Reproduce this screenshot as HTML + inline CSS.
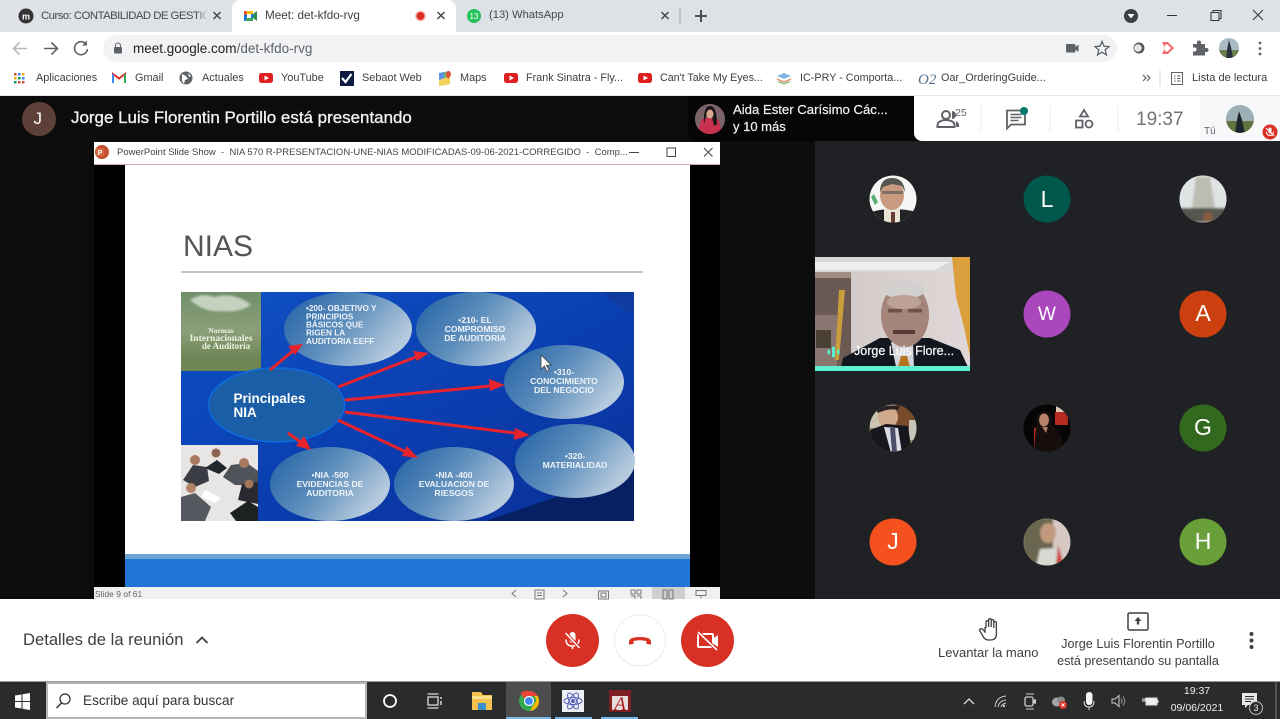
<!DOCTYPE html>
<html lang="es"><head><meta charset="utf-8"><title>Meet: det-kfdo-rvg</title>
<style>
html,body{margin:0;padding:0;width:1280px;height:719px;overflow:hidden;background:#fff}
body{position:relative;font-family:"Liberation Sans",sans-serif}
.a{position:absolute}
.t{position:absolute;white-space:nowrap;line-height:1}
svg{position:absolute;left:0;top:0;overflow:visible}
</style></head><body>
<div class="a" style="left:0;top:0;width:1280px;height:32px;background:#dee1e6"></div>
<div class="a" style="left:0;top:32px;width:1280px;height:32px;background:#fff"></div>
<div class="a" style="left:103px;top:35px;width:1014px;height:27px;border-radius:14px;background:#f1f3f4"></div>
<div class="a" style="left:0;top:64px;width:1280px;height:32px;background:#fff;border-bottom:1px solid #e8e8e8;box-sizing:border-box"></div>
<div class="a" style="left:232px;top:0;width:224px;height:33px;background:#fff;border-radius:8px 8px 0 0"></div>

<!-- main regions -->
<div class="a" style="left:0;top:96px;width:815px;height:503px;background:#0c0c0c"></div>
<div class="a" style="left:815px;top:141px;width:465px;height:458px;background:#202124"></div>
<div class="a" style="left:688px;top:96px;width:240px;height:45px;background:#050505;border-radius:0 0 0 8px"></div>
<div class="a" style="left:914px;top:96px;width:366px;height:45px;background:#fff;border-radius:0 0 0 8px"></div>
<div class="a" style="left:1200px;top:96px;width:80px;height:45px;background:#f7f8f9"></div>

<!-- slide window -->
<div class="a" style="left:94px;top:142px;width:626px;height:457px;background:#000"></div>
<div class="a" style="left:94px;top:142px;width:626px;height:23px;background:#fff;border-bottom:1px solid #c9b3a6;box-sizing:border-box"></div>
<div class="a" style="left:125px;top:165px;width:565px;height:422px;background:#fff"></div>
<div class="a" style="left:125px;top:554px;width:565px;height:5px;background:#6ea3d6"></div>
<div class="a" style="left:125px;top:559px;width:565px;height:28px;background:#1f76d4"></div>
<div class="a" style="left:94px;top:587px;width:626px;height:12px;background:#f0f0f0"></div>
<div class="a" style="left:652px;top:587px;width:33px;height:12px;background:#cfcfcf"></div>
<div class="t" style="left:117px;top:148px;font-size:9.500px;color:#444">PowerPoint Slide Show &nbsp;-&nbsp; NIA 570 R-PRESENTACION-UNE-NIAS MODIFICADAS-09-06-2021-CORREGIDO &nbsp;-&nbsp; Comp...</div>
<div class="t" style="left:95px;top:590px;font-size:8.500px;color:#666">Slide 9 of 61</div>
<div class="t" style="left:183px;top:232px;font-size:30px;color:#555;font-weight:400;">NIAS</div>
<div class="a" style="left:181px;top:271px;width:462px;height:1.500px;background:#c4c4c4"></div>

<!-- bottom bars -->
<div class="a" style="left:0;top:599px;width:1280px;height:83px;background:#fff"></div>
<div class="a" style="left:0;top:681px;width:1280px;height:38px;background:#2a2b2c;border-top:1px solid #999;box-sizing:border-box"></div>
<div class="a" style="left:46px;top:682px;width:321px;height:37px;background:#fff;border:2px solid #b5b5b5;box-sizing:border-box"></div>
<div class="a" style="left:506px;top:682px;width:45px;height:37px;background:#4d4d4d"></div>
<div class="a" style="left:506px;top:717px;width:45px;height:2px;background:#76b9ed"></div>
<div class="a" style="left:555px;top:717px;width:37px;height:2px;background:#76b9ed"></div>
<div class="a" style="left:601px;top:717px;width:37px;height:2px;background:#76b9ed"></div>

<svg width="1280" height="719" viewBox="0 0 1280 719" xmlns="http://www.w3.org/2000/svg">
<defs>
<linearGradient id="bub" x1="0" y1="0" x2="1" y2="0.5"><stop offset="0" stop-color="#1f5fa5"/><stop offset=".55" stop-color="#5f8fbc"/><stop offset="1" stop-color="#b6cade"/></linearGradient>
<linearGradient id="bg" x1="0" y1="0" x2="1" y2="1"><stop offset="0" stop-color="#0f52c4"/><stop offset=".55" stop-color="#0a3eb0"/><stop offset="1" stop-color="#0a2f96"/></linearGradient>
<linearGradient id="book" x1="0" y1="0" x2="0" y2="1"><stop offset="0" stop-color="#6f8f6a"/><stop offset=".5" stop-color="#8b9f78"/><stop offset="1" stop-color="#5f7a45"/></linearGradient>
<linearGradient id="wall" x1="0" y1="0" x2="1" y2="0"><stop offset="0" stop-color="#cfc8c6"/><stop offset="1" stop-color="#e0d8d8"/></linearGradient>
<filter id="b1"><feGaussianBlur stdDeviation=".35"/></filter>
<filter id="b2"><feGaussianBlur stdDeviation="1"/></filter>
<clipPath id="cv"><rect x="815" y="257" width="155" height="110"/></clipPath>
<clipPath id="c1"><circle cx="893" cy="199" r="23.5"/></clipPath>
<clipPath id="c3"><circle cx="1203" cy="199" r="23.5"/></clipPath>
<clipPath id="c7"><circle cx="893" cy="428" r="23.5"/></clipPath>
<clipPath id="c8"><circle cx="1047" cy="428" r="23.5"/></clipPath>
<clipPath id="c11"><circle cx="1047" cy="542" r="23.5"/></clipPath>
<clipPath id="cA"><circle cx="710" cy="119" r="15"/></clipPath>
<clipPath id="cP1"><circle cx="1229" cy="48" r="10"/></clipPath>
<clipPath id="cP2"><circle cx="1240" cy="119" r="14"/></clipPath>
</defs>

<!-- tabs -->
<circle cx="26" cy="16" r="7.500" fill="#333"/><text x="26" y="19.500" font-size="9" font-weight="700" fill="#fff" text-anchor="middle" font-family="Liberation Sans">m</text>
<path d="M213.500 12l7 7m0-7l-7 7M437.500 12l7 7m0-7l-7 7M661.500 12l7 7m0-7l-7 7" stroke="#45484c" stroke-width="1.500" fill="none"/>
<g><rect x="244" y="11" width="9" height="10" rx="1" fill="#1a73e8"/><rect x="246" y="11" width="7" height="3" fill="#fbbc04"/><rect x="246" y="18" width="7" height="3" fill="#34a853"/><rect x="244" y="11" width="2.500" height="4" fill="#ea4335"/><path d="M253 14l4-3v10l-4-3z" fill="#2d8c4e"/><rect x="247" y="14" width="4" height="4" fill="#fff"/></g>
<circle cx="420.500" cy="16" r="5.500" fill="#f7c5c0"/><circle cx="420.500" cy="16" r="4" fill="#d93025"/>
<circle cx="474" cy="16" r="7" fill="#25c15b"/><text x="474" y="19" font-size="8" fill="#fff" text-anchor="middle" font-family="Liberation Sans">13</text>
<path d="M680 8v16" stroke="#a9acb0"/>
<path d="M701 10v12M695 16h12" stroke="#3c4043" stroke-width="1.800"/>
<circle cx="1131" cy="16" r="7" fill="#3c4043"/><path d="M1127.500 14h7l-3.500 4.500z" fill="#fff"/>
<path d="M1167 15.500h10" stroke="#333" stroke-width="1"/>
<path d="M1211 12.500h8v8h-8zM1213 12.500v-2h8v8h-2" stroke="#333" fill="none"/>
<path d="M1253 10l10 10m0-10l-10 10" stroke="#333" fill="none"/>

<!-- toolbar icons -->
<path d="M27 48.500H14m5.500-6l-6 6 6 6" stroke="#b4b7bb" stroke-width="1.600" fill="none"/>
<path d="M44 48.500h13m-5.500-6l6 6-6 6" stroke="#5f6368" stroke-width="1.600" fill="none"/>
<path d="M86 44a6.500 6.500 0 1 0 1.500 5" stroke="#5f6368" stroke-width="1.600" fill="none"/><path d="M87 40.500v5h-5z" fill="#5f6368"/>
<rect x="114" y="47" width="8" height="6.500" rx="1" fill="#5f6368"/><path d="M115.500 47v-1.500a2.500 2.500 0 0 1 5 0V47" stroke="#5f6368" fill="none"/>
<rect x="1066" y="44" width="9.500" height="8.500" rx="1" fill="#5f6368"/><path d="M1075.500 47l3-2.500v7.500l-3-2.500z" fill="#5f6368"/>
<path d="M1102 41.500l2 4.700 5 .4-3.800 3.300 1.200 5-4.400-2.700-4.400 2.700 1.200-5-3.800-3.300 5-.4z" stroke="#5f6368" stroke-width="1.300" fill="none"/>
<circle cx="1139" cy="48" r="5.500" fill="#555"/><circle cx="1138" cy="48" r="3.800" fill="#e8e8e8"/>
<path d="M1162 42h6l6 6-6 6h-6l3-6z" fill="#f26d6d"/><path d="M1165 44.500h2.500l3.500 3.500-3.500 3.500h-2.500z" fill="#fff"/>
<path d="M1193 44h4v-1.500a2 2 0 0 1 4 0V44h4v4h1.500a2 2 0 0 1 0 4H1205v3.500h-12v-4h1.500a2 2 0 0 0 0-4H1193z" fill="#5f6368"/>
<g clip-path="url(#cP1)"><rect x="1219" y="38" width="20" height="20" fill="#a9bcc4"/><rect x="1219" y="50" width="20" height="8" fill="#6d7f4d"/><path d="M1226 58l1.500-11 1.500-7 2 7 2 11z" fill="#29323a"/></g>
<circle cx="1260" cy="43" r="1.400" fill="#5f6368"/><circle cx="1260" cy="48.500" r="1.400" fill="#5f6368"/><circle cx="1260" cy="54" r="1.400" fill="#5f6368"/>

<!-- bookmark icons -->
<g fill="#d9503f"><rect x="14" y="73" width="2.500" height="2.500"/></g><g fill="#4285f4"><rect x="18" y="73" width="2.500" height="2.500"/><rect x="22" y="77" width="2.500" height="2.500"/></g><g fill="#f4b400"><rect x="22" y="73" width="2.500" height="2.500"/><rect x="14" y="77" width="2.500" height="2.500"/></g><g fill="#0f9d58"><rect x="18" y="77" width="2.500" height="2.500"/><rect x="14" y="81" width="2.500" height="2.500"/></g><g fill="#d9503f"><rect x="18" y="81" width="2.500" height="2.500"/><rect x="22" y="81" width="2.500" height="2.500"/></g>
<path d="M113 83V74l6 4.500 6-4.500v9" stroke="#d93025" stroke-width="2" fill="none"/><path d="M113 74v9" stroke="#4285f4" stroke-width="2"/><path d="M125 74v9" stroke="#34a853" stroke-width="2"/>
<circle cx="186" cy="78" r="6.500" fill="#5f6368"/><path d="M182 74l4 2 2 3-3 1-1 4-2-3zM188 73l3 3-2 1z" fill="#fff"/>
<g><rect x="259" y="73" width="14" height="10" rx="2.500" fill="#e02020"/><path d="M264.500 75.500l4.500 2.500-4.500 2.500z" fill="#fff"/></g>
<g><rect x="504" y="73" width="14" height="10" rx="2.500" fill="#e02020"/><path d="M509.500 75.500l4.500 2.500-4.500 2.500z" fill="#fff"/></g>
<g><rect x="638" y="73" width="14" height="10" rx="2.500" fill="#e02020"/><path d="M643.500 75.500l4.500 2.500-4.500 2.500z" fill="#fff"/></g>
<rect x="340" y="71" width="14" height="15" fill="#0d1b40"/><path d="M342 78l3.500 4 6-8" stroke="#fff" stroke-width="2.200" fill="none"/>
<g><path d="M439 73l11-2v13l-11 2z" fill="#6fb56d"/><path d="M439 80l11-4v8l-11 2z" fill="#f3d35b"/><path d="M448 71a3 3 0 0 1 3 3c0 2-3 5-3 5s-2-3-2-5a2.500 2.500 0 0 1 2-3z" fill="#e0503f"/><path d="M439 73l5-1v6l-5 2z" fill="#5b8fe8"/></g>
<path d="M777 76l7-3 7 3-7 3z" fill="#7fb3e0"/><path d="M777 79l7 3 7-3" stroke="#e88a6a" stroke-width="1.300" fill="none"/><path d="M778 81.500l6 2.500 6-2.500" stroke="#8cc07a" stroke-width="1.300" fill="none"/>
<text x="918" y="84" font-family="Liberation Serif" font-style="italic" font-size="15" fill="#54708f">O2</text>
<path d="M1143 75l3 3-3 3m4-6l3 3-3 3" stroke="#5f6368" stroke-width="1.200" fill="none"/>
<path d="M1160 70v16" stroke="#d5d7da"/>
<rect x="1171.500" y="72.500" width="11" height="12" fill="none" stroke="#5f6368"/><path d="M1174 76h1.500m1.500 0h3.500M1174 78.500h1.500m1.500 0h3.500M1174 81h1.500m1.500 0h3.500" stroke="#5f6368"/>

<!-- top bar icons -->
<circle cx="39" cy="119" r="17" fill="#5d4037"/>
<circle cx="710" cy="119" r="15" fill="#6a4a50"/><g clip-path="url(#cA)" filter="url(#b1)"><rect x="695" y="104" width="30" height="30" fill="#7a6468"/><path d="M697 135l4-15q9-5 18 0l3 15z" fill="#c8304f"/><path d="M704 124q-1-18 6-18t7 18l-3 2-3-14-4 0z" fill="#1d1214"/><ellipse cx="710" cy="114" rx="3.500" ry="4.500" fill="#d8a890"/></g>
<g fill="#5f6368"><circle cx="946" cy="115" r="4" fill="none" stroke="#5f6368" stroke-width="2"/><path d="M937.500 127v-2c0-3 4-5 8.500-5s8.500 2 8.500 5v2z" fill="none" stroke="#5f6368" stroke-width="2"/><path d="M952 111a4 4 0 0 1 0 8zM956 121c2 1 3 2.500 3 4v2h-3z"/></g>
<path d="M981 106v26M1050 106v26M1118 106v26" stroke="#eceef0"/>
<path d="M1007 110.500h18v14h-14l-4 4z" fill="none" stroke="#5f6368" stroke-width="1.800"/><path d="M1010.500 114.500h11M1010.500 117.500h11M1010.500 120.500h8" stroke="#5f6368" stroke-width="1.500"/>
<circle cx="1024" cy="111" r="4" fill="#00796b"/>
<path d="M1084 110l4 6.500h-8z" fill="none" stroke="#5f6368" stroke-width="1.800"/><rect x="1076" y="120.500" width="6.500" height="7" fill="none" stroke="#5f6368" stroke-width="1.800"/><circle cx="1089" cy="124" r="3.500" fill="none" stroke="#5f6368" stroke-width="1.800"/>
<g clip-path="url(#cP2)" filter="url(#b1)"><rect x="1226" y="105" width="28" height="28" fill="#9db0b6"/><rect x="1226" y="121" width="28" height="12" fill="#62733f"/><path d="M1235 133l2-13 2-9 3 9 3 13z" fill="#1f272c"/></g>
<circle cx="1270" cy="132" r="7.500" fill="#d93025"/><rect x="1268.500" y="127.500" width="3" height="6" rx="1.500" fill="#fff"/><path d="M1266.500 131.500q0 4 3.500 4t3.500-4M1266 128l8 8" stroke="#fff" fill="none"/>

<!-- window controls -->
<circle cx="102" cy="152" r="7" fill="#c8502e"/><rect x="96" y="148" width="8" height="8" rx="1" fill="#d2683f"/><text x="100" y="155" font-size="7" font-weight="700" fill="#fff" text-anchor="middle" font-family="Liberation Sans">P</text>
<path d="M629 152.500h10" stroke="#444"/><rect x="667" y="148" width="8.500" height="8.500" fill="none" stroke="#444"/><path d="M704 148l8.500 8.500m0-8.500l-8.500 8.500" stroke="#444" fill="none"/>
<g stroke="#777" fill="none"><path d="M516 590l-4 3.500 4 3.500M563 590l4 3.500-4 3.500"/><path d="M535 590h9v9h-9zM537 593h5M537 595.500h5"/><path d="M598.500 591h10v8h-10zM601 593h5v4h-5z"/><path d="M631 590h4v4h-4zM637 590h4v4h-4zM631 596h4v3M637 596h4v3"/><path d="M663 590h4v9h-4zM669 590h4v9h-4z"/><path d="M696 590.500h10v5h-10zM701 595.500v3"/></g>

<!-- diagram -->
<g>
<rect x="181" y="292" width="453" height="229" fill="url(#bg)"/>
<path d="M600 292h34v24z" fill="#1e6ad0"/>
<path d="M486 521L634 470v51z" fill="#062063"/>
<path d="M600 292L634 316V292z" fill="#0f3aa0"/>
<rect x="181" y="292" width="80" height="79" fill="url(#book)"/>
<path d="M190 300q12-8 24-3 12-3 22 0 10 3 15 8-12 8-30 6-16 2-31-11z" fill="#c5d2bf" filter="url(#b2)"/>
<rect x="181" y="360" width="80" height="11" fill="#6f8552"/>
<text x="221" y="333" font-family="Liberation Serif" font-weight="700" font-size="7.500" fill="#eef2e2" text-anchor="middle">Normas</text>
<text x="221" y="341" font-family="Liberation Serif" font-weight="700" font-size="9.500" fill="#eef2e2" text-anchor="middle">Internacionales</text>
<text x="226" y="349" font-family="Liberation Serif" font-weight="700" font-size="9" fill="#eef2e2" text-anchor="middle">de Auditoría</text>
<rect x="181" y="445" width="77" height="76" fill="#e8e6e4"/>
<g filter="url(#b1)">
<path d="M183 480l10-15 14 2 2 14-14 6z" fill="#3b3d44"/><circle cx="195" cy="460" r="5" fill="#a97a60"/>
<path d="M205 468l12-8 10 8-8 6z" fill="#23252c"/><circle cx="216" cy="453" r="4.500" fill="#8e6650"/>
<path d="M235 485l-12-8 8-12 16-2 11 8v14z" fill="#50525a"/><circle cx="244" cy="463" r="5" fill="#a97a60"/>
<path d="M238 500l4-16 16-2v22z" fill="#2b2b30"/><circle cx="249" cy="484" r="4.500" fill="#a07458"/>
<path d="M181 521v-24l14-4 16 14-6 14z" fill="#555a60"/><circle cx="191" cy="488" r="5" fill="#b28568"/>
<path d="M205 490l16 8-6 5-14-6z" fill="#fff"/>
<path d="M236 521l-6-8 18-12 10 6v14z" fill="#1f2024"/>
</g>
<g><ellipse cx="348" cy="329" rx="64" ry="37" fill="url(#bub)"/><ellipse cx="476" cy="329" rx="60" ry="37" fill="url(#bub)"/><ellipse cx="564" cy="382" rx="60" ry="37" fill="url(#bub)"/><ellipse cx="575" cy="461" rx="60" ry="37" fill="url(#bub)"/><ellipse cx="454" cy="484" rx="60" ry="37" fill="url(#bub)"/><ellipse cx="330" cy="484" rx="60" ry="37" fill="url(#bub)"/></g>
<ellipse cx="276.500" cy="405" rx="68" ry="37" fill="#1a5ea8" stroke="#0d6be0" stroke-width="1.500"/>
<g stroke="#e8232b" stroke-width="3" fill="#e8232b">
<path d="M270 370l24-20"/><path d="M303 344l-15 2 7 9z" stroke="none"/>
<path d="M338 387l78-30"/><path d="M429 353l-16-2 4 10z" stroke="none"/>
<path d="M345 400l146-14"/><path d="M505 385l-16-6 1 12z" stroke="none"/>
<path d="M345 412l170 21"/><path d="M530 435l-15-7-1 12z" stroke="none"/>
<path d="M338 420l68 32"/><path d="M418 458l-11-12-5 10z" stroke="none"/>
<path d="M288 433l14 10"/><path d="M311 450l-7-14-8 10z" stroke="none"/>
</g>
<g font-family="Liberation Sans" font-weight="700" fill="#eef3f8" filter="url(#b1)">
<g font-size="8.200">
<text x="306" y="311">•200- OBJETIVO Y</text><text x="306" y="319.500">PRINCIPIOS</text><text x="306" y="327.500">BÁSICOS QUE</text><text x="306" y="335.500">RIGEN LA</text><text x="306" y="344">AUDITORIA EEFF</text>
</g>
<g text-anchor="middle" font-size="8.600">
<text x="475" y="323">•210-  EL</text><text x="475" y="332">COMPROMISO</text><text x="475" y="341">DE AUDITORIA</text>
<text x="564" y="375">•310-</text><text x="564" y="384">CONOCIMIENTO</text><text x="564" y="393">DEL NEGOCIO</text>
<text x="575" y="459">•320-</text><text x="575" y="468">MATERIALIDAD</text>
<text x="454" y="478">•NIA -400</text><text x="454" y="487">EVALUACION DE</text><text x="454" y="496">RIESGOS</text>
<text x="330" y="478">•NIA -500</text><text x="330" y="487">EVIDENCIAS DE</text><text x="330" y="496">AUDITORIA</text>
</g>
<text x="233.500" y="403" font-size="13.500" fill="#fff">Principales</text><text x="233.500" y="417" font-size="13.500" fill="#fff">NIA</text>
</g>
<path d="M541 355v14l3.500-3 2.500 5.500 2-1-2.500-5.300 4.500-.2z" fill="#fff" stroke="#444" stroke-width=".8"/>
</g>

<!-- avatars -->
<circle cx="893" cy="199" r="23.500" fill="#f5f5f3"/>
<g clip-path="url(#c1)" filter="url(#b1)"><path d="M868 213q12-4 24-4t26 3v15h-50z" fill="#202428"/><rect x="884" y="209" width="16" height="14" fill="#e8e2d4"/><path d="M891 212h4v11h-4z" fill="#6b3a30"/><ellipse cx="892" cy="195" rx="12" ry="15" fill="#c89a80"/><path d="M880 192q0-14 12-14t13 14l-3-6-10-2-9 3z" fill="#54564f"/><rect x="882" y="191" width="21" height="3" fill="#5a5a5a" opacity=".7"/><path d="M871 197l4 8 3-3-4-8z" fill="#58b070"/></g>
<circle cx="1047" cy="199" r="23.500" fill="#00574b"/>
<circle cx="1203" cy="199" r="23.500" fill="#e4e6e6"/>
<g clip-path="url(#c3)" filter="url(#b2)"><rect x="1180" y="175" width="47" height="47" fill="#dfe3e4"/><path d="M1192 208l4-31h14l5 31z" fill="#bdbcb2"/><rect x="1180" y="208" width="47" height="14" fill="#55564f"/><ellipse cx="1208" cy="217" rx="5" ry="5" fill="#8a5a40"/></g>
<circle cx="1047" cy="314" r="23.500" fill="#ab47bc"/>
<circle cx="1203" cy="314" r="23.500" fill="#cc400f"/>
<circle cx="893" cy="428" r="23.500" fill="#9a8a70"/>
<g clip-path="url(#c7)" filter="url(#b1)"><rect x="870" y="405" width="24" height="23" fill="#c9c4b0"/><rect x="896" y="405" width="22" height="24" fill="#7a4c2a"/><rect x="909" y="420" width="9" height="20" fill="#c8c6b8"/><ellipse cx="888" cy="417" rx="10" ry="11" fill="#d0a88c"/><path d="M876 410q6-6 24-4l-2 4q-10-2-20 3z" fill="#2c2420"/><path d="M870 430l16-6 22 2 4 28h-40z" fill="#16181c"/><path d="M884 427l14 1 4 25h-11z" fill="#dcdce6"/><path d="M890 428h5l2 24h-5z" fill="#50506a"/></g>
<circle cx="1047" cy="428" r="23.500" fill="#050505"/>
<g clip-path="url(#c8)" filter="url(#b1)"><rect x="1055" y="412" width="13" height="13" fill="#b62a20"/><rect x="1056" y="405" width="12" height="7" fill="#dcc9b4"/><path d="M1034 428l9-4v24h-9z" fill="#b8251c"/><path d="M1036 426q0-15 8-15t8 12l10 14 2 14h-30z" fill="#14110f"/><ellipse cx="1044" cy="420" rx="5" ry="6.500" fill="#b88268"/><path d="M1042 427h6l-2 6z" fill="#a87a62"/></g>
<circle cx="1203" cy="428" r="23.500" fill="#33691e"/>
<circle cx="893" cy="542" r="23.500" fill="#f4511e"/>
<circle cx="1047" cy="542" r="23.500" fill="#8d8a72"/>
<g clip-path="url(#c11)" filter="url(#b2)"><rect x="1024" y="519" width="47" height="47" fill="#6a6650"/><rect x="1053" y="519" width="18" height="47" fill="#d8c8c4"/><ellipse cx="1048" cy="533" rx="8" ry="10" fill="#c39a80"/><path d="M1036 566l4-17 16-1 8 18z" fill="#d8dad4"/><path d="M1058 545l6 20h-8z" fill="#c84a44"/></g>
<circle cx="1203" cy="542" r="23.500" fill="#689f38"/>

<!-- video tile -->
<g clip-path="url(#cv)">
<rect x="815" y="257" width="155" height="114" fill="url(#wall)"/>
<rect x="815" y="257" width="155" height="15" fill="#d8d8d8"/>
<path d="M815 262h135l-15 8H815z" fill="#eeeeee"/>
<rect x="815" y="272" width="36" height="94" fill="#6b5a54"/>
<rect x="815" y="272" width="36" height="6" fill="#9f8d84"/>
<rect x="815" y="315" width="22" height="52" fill="#8a7670"/>
<path d="M845 290l-6 70h-4l4-70z" fill="#c99c3c"/>
<path d="M952 257h18v100l-6-30-8-30z" fill="#dc9f3e"/>
<rect x="816" y="330" width="15" height="18" fill="#4a4036"/>
<path d="M841 367l2-9 37-20h50l30 12 8 17z" fill="#12161e"/>
<path d="M891 342l5 25h18l-1-25z" fill="#d4d4da"/>
<path d="M901 356h6l3 11h-12z" fill="#b8741f"/>
<g filter="url(#b1)">
<ellipse cx="905" cy="315" rx="24" ry="32" fill="#a5857a"/>
<ellipse cx="904" cy="290" rx="21" ry="9" fill="#d2d0ce"/>
<ellipse cx="904" cy="302" rx="17" ry="7" fill="#bfa296"/>
<rect x="888" y="309" width="14" height="3.500" fill="#6e534c"/><rect x="908" y="309" width="14" height="3.500" fill="#6e534c"/>
<rect x="893" y="330" width="22" height="4" fill="#553a36"/>
</g>
</g>
<rect x="815" y="366" width="155" height="5" fill="#5cf2cf"/>
<g fill="#5cf2cf"><rect x="827.500" y="349.500" width="2.500" height="5" rx="1.200"/><rect x="832" y="346.500" width="3" height="11" rx="1.500"/><rect x="837" y="349.500" width="2.500" height="5" rx="1.200"/></g>

<!-- bottom icons -->
<path d="M196.500 643l5.500-5.500 5.500 5.500" stroke="#3c4043" stroke-width="1.800" fill="none"/>
<circle cx="572.500" cy="640.500" r="26.500" fill="#d93025"/>
<rect x="569.500" y="632" width="6" height="11" rx="3" fill="#fff"/><path d="M566 639.500q0 6.500 6.500 6.500t6.500-6.500M572.500 646v3" stroke="#fff" stroke-width="1.500" fill="none"/><path d="M565.500 633l14 15" stroke="#d93025" stroke-width="3.500"/><path d="M565.500 633l14 15" stroke="#fff" stroke-width="1.500"/>
<circle cx="640" cy="640.500" r="25.500" fill="#fff" stroke="#e8eaed"/>
<path d="M629 642q0-5 11-5t11 5v2.500l-4.500-.5v-3q-6.500-1.500-13 0v3l-4.500.5z" fill="#d93025"/>
<circle cx="707.500" cy="640.500" r="26.500" fill="#d93025"/>
<rect x="698" y="634" width="15" height="13" rx="1" fill="none" stroke="#fff" stroke-width="2"/><path d="M713 638.500l5-3.500v12l-5-3.500z" fill="#fff"/><path d="M698 632l19 18" stroke="#d93025" stroke-width="3.500"/><path d="M698 632l19 18" stroke="#fff" stroke-width="1.600"/>
<path d="M986 628v-6a1.300 1.300 0 0 1 2.600 0v5m0 0v-7a1.300 1.300 0 0 1 2.600 0v7m0 0v-6a1.300 1.300 0 0 1 2.600 0v7m0 0v-5a1.300 1.300 0 0 1 2.600 0v11q0 6-6 6h-2q-3 0-5-3l-4-7q1-2 3-1l2.600 3v-5" fill="none" stroke="#3c4043" stroke-width="1.300"/>
<rect x="1128" y="613" width="20" height="17" rx="1.500" fill="none" stroke="#3c4043" stroke-width="1.500"/><path d="M1138 617l-3.500 4h2.300v3.500h2.400V621h2.300z" fill="#3c4043"/>
<circle cx="1251.500" cy="634" r="2" fill="#3c4043"/><circle cx="1251.500" cy="640.500" r="2" fill="#3c4043"/><circle cx="1251.500" cy="647" r="2" fill="#3c4043"/>

<!-- taskbar icons -->
<path d="M15 695.500l6.500-1v6.500H15zM22.500 694.300l7.500-1.300v8h-7.500zM15 702h6.500v6.500l-6.500-1zM22.500 702H30v8l-7.500-1.200z" fill="#fff"/>
<circle cx="65" cy="699" r="5" fill="none" stroke="#333" stroke-width="1.300"/><path d="M61.500 703l-5 5" stroke="#333" stroke-width="1.500"/>
<circle cx="390" cy="701" r="6" fill="none" stroke="#fff" stroke-width="1.800"/>
<path d="M427.500 694h11M427.500 708h11" stroke="#ddd" stroke-width="1.300"/><rect x="428" y="697" width="10" height="8" fill="none" stroke="#ddd" stroke-width="1.300"/><path d="M441 697v2M441 701v4" stroke="#ddd" stroke-width="1.500"/>
<path d="M472 692h9l2 3h9v15h-20z" fill="#f2c14e"/><rect x="472" y="696" width="20" height="3" fill="#fbe08a"/><rect x="478" y="703" width="8" height="7" fill="#3a8fd0"/>
<circle cx="529" cy="701" r="10" fill="#34a853"/><path d="M529 691a10 10 0 0 1 8.700 5H529a5 5 0 0 0-4.500 2.800l-4-5.600a10 10 0 0 1 8.500-2.200z" fill="#ea4335"/><path d="M537.700 696a10 10 0 0 1-7.700 15l4-7a5 5 0 0 0 0-8z" fill="#fbbc04"/><circle cx="529" cy="701" r="4.500" fill="#4285f4" stroke="#fff" stroke-width="1.200"/>
<rect x="562" y="690" width="22" height="22" fill="#eef0f6"/><g fill="none" stroke="#5560b5"><ellipse cx="573" cy="701" rx="9" ry="3.500"/><ellipse cx="573" cy="701" rx="9" ry="3.500" transform="rotate(60 573 701)"/><ellipse cx="573" cy="701" rx="9" ry="3.500" transform="rotate(120 573 701)"/></g><circle cx="573" cy="701" r="2" fill="#5560b5"/>
<rect x="609" y="690" width="22" height="22" fill="#7d1f23"/><rect x="612" y="696" width="16" height="14" fill="#e8dcd8"/><text x="620" y="710" font-family="Liberation Serif" font-style="italic" font-size="19" fill="#a91f26" text-anchor="middle">A</text>
<path d="M964 704l5-5 5 5" stroke="#ddd" stroke-width="1.300" fill="none"/>
<path d="M995 707q1-10 11-11M998 707q1-6 8-7M1001 707q1-3 5-4" stroke="#ccc" fill="none"/><circle cx="1004" cy="706" r="1.200" fill="#ccc"/>
<path d="M1026 694h8M1026 709h8" stroke="#ccc"/><rect x="1025" y="697" width="8" height="9" rx="1.500" fill="none" stroke="#ccc" stroke-width="1.300"/><path d="M1033 700l3-1v5l-3-1z" fill="#ccc"/>
<ellipse cx="1057" cy="702" rx="5" ry="4.500" fill="#a7a7a7"/><ellipse cx="1061" cy="700" rx="4" ry="3.500" fill="#8a8a8a"/><circle cx="1063" cy="705" r="4" fill="#d9322a"/><path d="M1061.500 703.500l3 3m0-3l-3 3" stroke="#fff" stroke-width=".9"/>
<rect x="1086" y="692" width="6.500" height="13" rx="3.200" fill="#f4f4f4"/><path d="M1084 701q0 6 5 6t5-6M1089 707v3" stroke="#ddd" fill="none"/>
<path d="M1112 699h3l4-3.500v11l-4-3.500h-3z" fill="none" stroke="#ccc"/><path d="M1121 698.500q2 2.500 0 5M1123 696.500q3.500 4.500 0 9" stroke="#999" fill="none"/>
<rect x="1146" y="698" width="11" height="7" fill="#eee" stroke="#ddd"/><path d="M1142 701h4M1143 698v3M1145 698v3" stroke="#ddd" fill="none"/><rect x="1157" y="700" width="1.500" height="3" fill="#ddd"/>
<path d="M1242 693h15v12h-9l-3 3v-3h-3z" fill="#e8e8e8"/><path d="M1245 696.500h9M1245 699h9M1245 701.500h6" stroke="#2a2b2c" stroke-width="1"/>
<circle cx="1256" cy="708" r="6.500" fill="#2a2b2c" stroke="#bbb"/><path d="M1276 682v37" stroke="#777"/>
</svg>

<!-- chrome text -->
<div class="a" style="left:41px;top:9px;width:166px;height:14px;overflow:hidden"><div class="t" style="left:0;top:2px;font-size:11.400px;color:#45484c;letter-spacing:-.55px">Curso: CONTABILIDAD DE GESTIÓN</div></div>
<div class="a" style="left:196px;top:6px;width:12px;height:20px;background:linear-gradient(90deg,rgba(222,225,230,0),#dee1e6)"></div>
<div class="t" style="left:265px;top:10px;font-size:11.700px;color:#3c4043">Meet: det-kfdo-rvg</div>
<div class="t" style="left:489px;top:10px;font-size:11.200px;color:#45484c">(13) WhatsApp</div>
<div class="t" style="left:133px;top:42px;font-size:13.500px;color:#202124">meet.google.com<span style="color:#5f6368">/det-kfdo-rvg</span></div>
<div class="t" style="left:36px;top:73px;font-size:10.900px;color:#3c4043">Aplicaciones</div>
<div class="t" style="left:135px;top:73px;font-size:10.900px;color:#3c4043">Gmail</div>
<div class="t" style="left:202px;top:73px;font-size:10.900px;color:#3c4043">Actuales</div>
<div class="t" style="left:281px;top:73px;font-size:10.900px;color:#3c4043">YouTube</div>
<div class="t" style="left:362px;top:73px;font-size:10.900px;color:#3c4043">Sebaot Web</div>
<div class="t" style="left:460px;top:73px;font-size:10.900px;color:#3c4043">Maps</div>
<div class="t" style="left:526px;top:73px;font-size:10.800px;color:#3c4043">Frank Sinatra - Fly...</div>
<div class="t" style="left:660px;top:73px;font-size:10.700px;color:#3c4043">Can't Take My Eyes...</div>
<div class="t" style="left:800px;top:73px;font-size:10.800px;color:#3c4043">IC-PRY - Comporta...</div>
<div class="t" style="left:941px;top:73px;font-size:10.900px;color:#3c4043">Oar_OrderingGuide...</div>
<div class="t" style="left:1192px;top:73px;font-size:11.100px;color:#3c4043">Lista de lectura</div>

<!-- meet text -->
<div class="t" style="left:33.500px;top:110px;font-size:17px;color:#fff">J</div>
<div class="t" style="left:71px;top:110px;font-size:16.950px;font-weight:400;color:#f3f3f3;-webkit-text-stroke:.3px #f3f3f3">Jorge Luis Florentin Portillo está presentando</div>
<div class="t" style="left:733px;top:103px;font-size:13.150px;color:#f2f2f2;-webkit-text-stroke:.2px #f2f2f2">Aida Ester Carísimo Các...</div>
<div class="t" style="left:733px;top:120px;font-size:13px;color:#f2f2f2;-webkit-text-stroke:.2px #f2f2f2">y 10 más</div>
<div class="t" style="left:955px;top:108px;font-size:10.500px;color:#5f6368">25</div>
<div class="t" style="left:1136px;top:110px;font-size:19px;color:#70757a">19:37</div>
<div class="t" style="left:1204px;top:127px;font-size:10px;color:#5f6368">Tú</div>
<div class="t" style="left:854px;top:345px;font-size:12.500px;color:#fff;-webkit-text-stroke:.2px #fff">Jorge Luis Flore...</div>

<div class="t" style="left:1038px;top:188px;width:18px;text-align:center;font-size:23px;color:#fff">L</div>
<div class="t" style="left:1033px;top:305px;width:28px;text-align:center;font-size:19px;color:#fff">W</div>
<div class="t" style="left:1189px;top:302px;width:28px;text-align:center;font-size:23px;color:#fff">A</div>
<div class="t" style="left:1189px;top:416px;width:28px;text-align:center;font-size:23px;color:#fff">G</div>
<div class="t" style="left:879px;top:530px;width:28px;text-align:center;font-size:23px;color:#fff">J</div>
<div class="t" style="left:1189px;top:530px;width:28px;text-align:center;font-size:23px;color:#fff">H</div>

<div class="t" style="left:23px;top:632px;font-size:16.600px;color:#3c4043">Detalles de la reunión</div>
<div class="t" style="left:938px;top:646px;font-size:13px;color:#3c4043">Levantar la mano</div>
<div class="t" style="left:1038px;top:638px;width:200px;text-align:center;font-size:12.700px;color:#3c4043">Jorge Luis Florentin Portillo</div>
<div class="t" style="left:1038px;top:655px;width:200px;text-align:center;font-size:12.600px;color:#3c4043">está presentando su pantalla</div>

<div class="t" style="left:83px;top:694px;font-size:13.600px;color:#333">Escribe aquí para buscar</div>
<div class="t" style="left:1170px;top:686px;width:54px;text-align:center;font-size:10.500px;color:#eee">19:37</div>
<div class="t" style="left:1170px;top:703px;width:54px;text-align:center;font-size:10.500px;color:#eee">09/06/2021</div>
<div class="t" style="left:1252px;top:704px;width:8px;text-align:center;font-size:9px;color:#eee">3</div>
</body></html>
